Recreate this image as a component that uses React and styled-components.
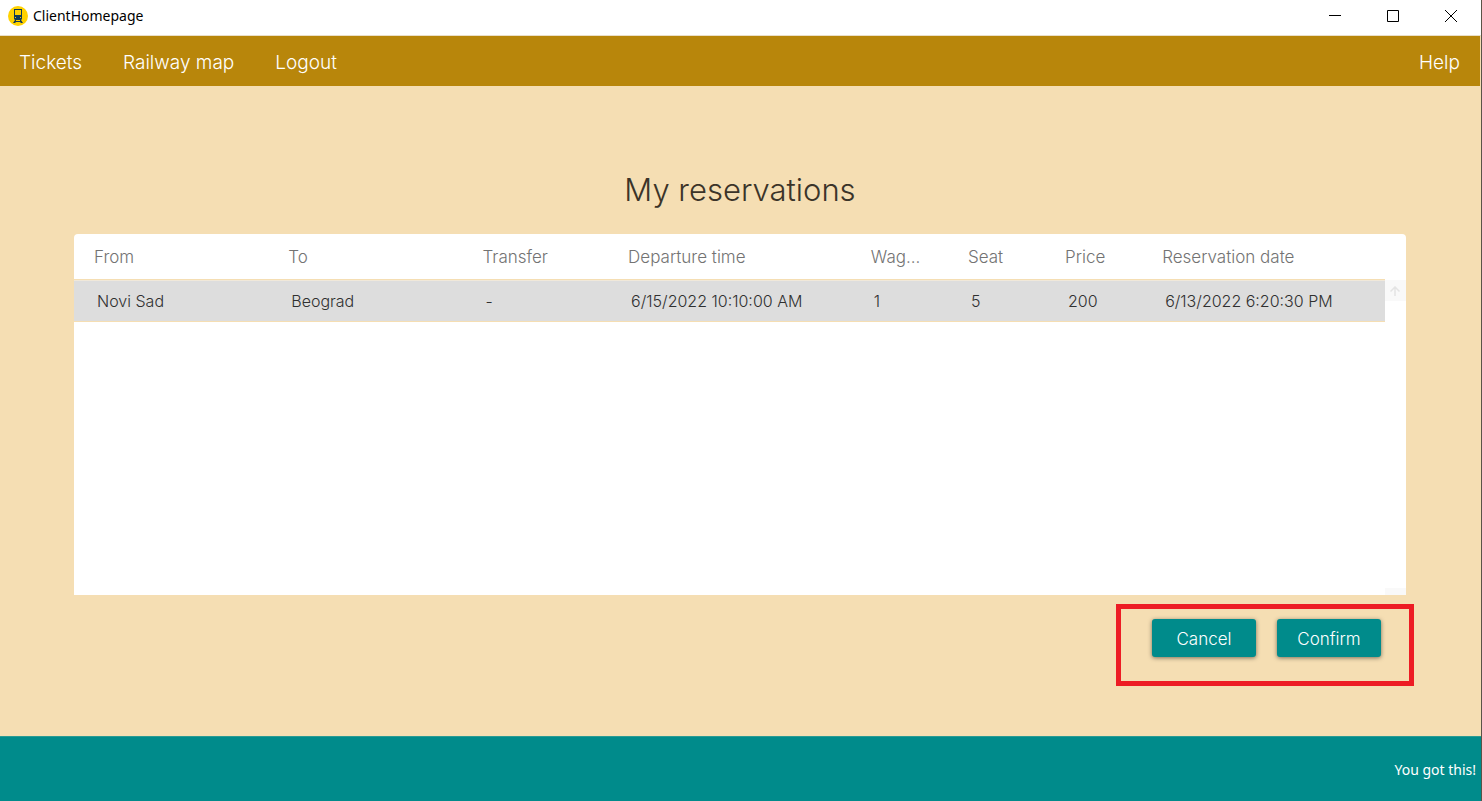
import React from "react";
import styled, { createGlobalStyle } from "styled-components";

const gothic = `"Century Gothic", "Inter", "Liberation Sans", sans-serif`;
const system = `"Segoe UI", "Noto Sans", "Open Sans", sans-serif`;

const GlobalStyle = createGlobalStyle`
  *, *::before, *::after { box-sizing: border-box; }
  body { margin: 0; background: #f5deb3; }
  button { font: inherit; cursor: pointer; }
`;

const Window = styled.div`
  display: flex;
  flex-direction: column;
  min-height: 100vh;
  border-right: 1px solid #5a5347;
  background: #f5deb3;
  font-family: ${gothic};
  font-weight: 300;
`;

const TitleBar = styled.header`
  display: flex;
  align-items: center;
  height: 36px;
  padding-left: 8px;
  padding-bottom: 4px;
  gap: 5px;
  background: #fff;
  border-bottom: 1px solid #eadfc8;
`;

const WindowTitle = styled.span`
  flex: 1;
  padding-top: 1px;
  color: #000;
  font: 400 14px/20px ${system};
`;

const WindowControls = styled.div`
  display: flex;
  margin-right: 1px;
`;

const WindowButton = styled.button`
  display: flex;
  align-items: center;
  justify-content: center;
  width: 58px;
  height: 32px;
  padding: 0;
  border: 0;
  background: transparent;
`;

const NavBar = styled.nav`
  display: flex;
  align-items: center;
  gap: 41px;
  height: 50px;
  padding: 3px 20px 0 19px;
  margin-right: 1px;
  background: #b8860b;
`;

const NavLink = styled.a`
  color: #fff;
  font-size: 19px;
  line-height: 28px;
  text-decoration: none;
  margin-left: ${(p) => (p.$end ? "auto" : "0")};
`;

const Main = styled.main`
  flex: 1;
  display: flex;
  flex-direction: column;
  margin-right: 1px;
  padding: 80px 5% 50px;
`;

const Heading = styled.h1`
  margin: 0;
  padding: 2px 0 22px;
  color: #3b3429;
  font-size: 31px;
  line-height: 44px;
  font-weight: 300;
  text-align: center;
`;

const Panel = styled.section`
  display: flex;
  align-items: flex-start;
  min-height: 361px;
  background: #fff;
  border-radius: 4px 4px 0 0;
`;

const Table = styled.table`
  flex: 1;
  min-width: 0;
  table-layout: fixed;
  border-collapse: separate;
  border-spacing: 0;
  font-size: 16px;
  line-height: 24px;
`;

const Column = styled.col`
  width: ${(p) => (p.$units / 27) * 100}%;
`;

const HeadCell = styled.th`
  height: 46px;
  padding: 0 20px;
  color: #737373;
  font-size: 17px;
  font-weight: 300;
  text-align: left;
  white-space: nowrap;
  border-bottom: 1px solid #f5deb3;
`;

const Cell = styled.td`
  height: 42px;
  padding: 0 0 0 23px;
  color: #303030;
  background: #ddd;
  white-space: nowrap;
  border-top: 1px solid #f0e8da;
  border-bottom: 1px solid #f5deb3;
`;

const ScrollTrack = styled.div`
  align-self: stretch;
  display: flex;
  flex-direction: column;
  justify-content: space-between;
  width: 21px;
  padding-top: 46px;
`;

const ScrollButton = styled.button`
  display: flex;
  align-items: center;
  justify-content: center;
  height: ${(p) => (p.$clipped ? 7 : 21)}px;
  padding: 0;
  border: 0;
  background: #f9f9f9;
`;

const Callout = styled.div`
  align-self: flex-end;
  display: flex;
  gap: 21px;
  margin: 9px -8px 0 0;
  padding: 10px 28px 24px 31px;
  border: 5px solid #ed1c24;
`;

const ActionButton = styled.button`
  width: 104px;
  height: 38px;
  padding: 2px 0 0;
  border: 0;
  border-radius: 3px;
  background: #008b8b;
  color: #fff;
  font-size: 17px;
  line-height: 24px;
  box-shadow: 0 1px 4px rgba(0, 0, 0, 0.5);
`;

const Footer = styled.footer`
  display: flex;
  align-items: center;
  justify-content: flex-end;
  height: 65px;
  padding: 2px 5px 0 0;
  background: #008b8b;
  border-top: 1px solid #2a9b93;
  color: #fff;
  font: 400 14px/20px ${system};
`;

const TrainIcon = () => (
  <svg width="20" height="20" viewBox="0 0 20 20" aria-hidden="true">
    <circle cx="10" cy="10" r="10" fill="#ffd200" />
    <path
      fill="#123a56"
      fillRule="evenodd"
      d="M6 3h8v10l-1 1 2 3h-2l-1-1H8l-1 1H5l2-3-1-1zM7 4v5h6V4zM7 11v1h1v-1zM12 11v1h1v-1zM8 14v1h4v-1z"
    />
  </svg>
);

const controls = [
  ["Minimize", "M0 5.5h12"],
  ["Maximize", "M.5.5h11v11H.5z"],
  ["Close", "M0 0l12 12M12 0L0 12"],
];

const columns = [
  ["From", 4],
  ["To", 4],
  ["Transfer", 3],
  ["Departure time", 5],
  ["Wag...", 2],
  ["Seat", 2],
  ["Price", 2],
  ["Reservation date", 5],
];

const reservations = [
  ["Novi Sad", "Beograd", "-", "6/15/2022 10:10:00 AM", "1", "5", "200", "6/13/2022 6:20:30 PM"],
];

export default function App() {
  return (
    <>
      <GlobalStyle />
      <Window>
        <TitleBar>
          <TrainIcon />
          <WindowTitle>ClientHomepage</WindowTitle>
          <WindowControls>
            {controls.map(([label, d]) => (
              <WindowButton key={label} type="button" aria-label={label}>
                <svg width="12" height="12" viewBox="0 0 12 12" fill="none" stroke="#000">
                  <path d={d} />
                </svg>
              </WindowButton>
            ))}
          </WindowControls>
        </TitleBar>
        <NavBar>
          <NavLink href="#tickets">Tickets</NavLink>
          <NavLink href="#map">Railway map</NavLink>
          <NavLink href="#logout">Logout</NavLink>
          <NavLink href="#help" $end>Help</NavLink>
        </NavBar>
        <Main>
          <Heading>My reservations</Heading>
          <Panel>
            <Table>
              <colgroup>
                {columns.map(([name, units]) => (
                  <Column key={name} $units={units} />
                ))}
              </colgroup>
              <thead>
                <tr>
                  {columns.map(([name]) => (
                    <HeadCell key={name} scope="col">{name}</HeadCell>
                  ))}
                </tr>
              </thead>
              <tbody>
                {reservations.map((row) => (
                  <tr key={row[7]}>
                    {row.map((value, i) => (
                      <Cell key={columns[i][0]}>{value}</Cell>
                    ))}
                  </tr>
                ))}
              </tbody>
            </Table>
            <ScrollTrack>
              <ScrollButton type="button" aria-label="Scroll up">
                <svg width="10" height="10" viewBox="0 0 10 10" fill="none" stroke="#e4e4e4" strokeWidth="1.5">
                  <path d="M5 10V1M.5 5.5L5 1l4.500 4.500" />
                </svg>
              </ScrollButton>
              <ScrollButton type="button" aria-label="Scroll down" $clipped />
            </ScrollTrack>
          </Panel>
          <Callout>
            <ActionButton type="button">Cancel</ActionButton>
            <ActionButton type="button">Confirm</ActionButton>
          </Callout>
        </Main>
        <Footer>You got this!</Footer>
      </Window>
    </>
  );
}
